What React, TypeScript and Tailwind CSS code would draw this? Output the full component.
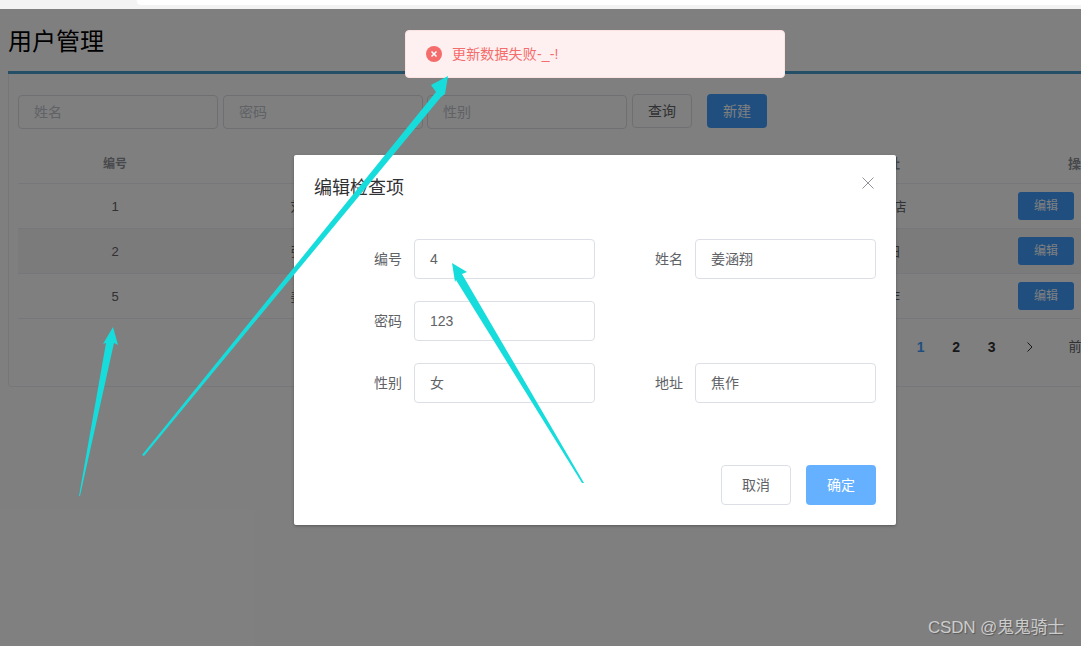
const rows = [
  { id: 1, name: "刘嘉怡", addr: "五星店", striped: false },
  { id: 2, name: "张雨桐", addr: "洛阳", striped: true },
  { id: 5, name: "姜涵翔", addr: "焦作", striped: false },
];

const SearchInput = ({ placeholder, className }: { placeholder: string; className: string }) => (
  <div className={`h-[34px] border border-[#dcdfe6] rounded-[4px] pl-[15px] flex items-center text-sm text-[#c0c4cc] ${className}`}>
    {placeholder}
  </div>
);

const Field = ({ label, value, labelWidth }: { label: string; value: string; labelWidth: string }) => (
  <div className="flex items-center">
    <label className={`${labelWidth} pr-3 text-right text-sm text-[#606266]`}>{label}</label>
    <div className="w-[181px] h-10 border border-[#dcdfe6] rounded-[4px] pl-[15px] flex items-center text-sm text-[#606266]">
      {value}
    </div>
  </div>
);

const App = () => {
  return (
    <div
      className="relative w-[1081px] h-[646px] overflow-hidden bg-white"
      style={{ fontFamily: '"Liberation Sans", "Noto Sans CJK SC", sans-serif' }}
    >
      {/* 브라우저 상단 */}
      <div className="h-[9px] bg-[#f3f3f3] pl-[137px]">
        <div className="h-[5px] bg-white rounded-bl-[4px]" />
      </div>

      {/* 페이지 */}
      <div className="w-[1200px] pl-2">
        <h1 className="h-[62px] pt-[15px] text-2xl leading-9 text-black">用户管理</h1>
        <div className="h-[3px] bg-[#4a9ecc]" />
        <div className="h-[313px] border-l border-b border-[#ebeef5] rounded-bl-[4px] pl-[9px]">
          <div className="flex items-start pt-[21px]">
            <SearchInput placeholder="姓名" className="w-[200px]" />
            <SearchInput placeholder="密码" className="w-[200px] ml-[5px]" />
            <SearchInput placeholder="性别" className="w-[200px] ml-1" />
            <button className="w-[60px] h-[34px] -mt-px ml-[5px] border border-[#dcdfe6] rounded-[4px] text-sm text-[#606266]">
              查询
            </button>
            <button className="w-[60px] h-[34px] -mt-px ml-[15px] bg-[#409eff] rounded-[4px] text-sm text-white">
              新建
            </button>
          </div>

          <div className="flex h-[41px] mt-[14px] pt-[2px] items-center border-b border-[#ebeef5] text-xs font-bold text-[#909399]">
            <div className="w-[194px] text-center">编号</div>
            <div className="w-[196px] text-center">姓名</div>
            <div className="w-[399px] text-center">密码</div>
            <div className="w-[160px] text-center text-[13px]">地址</div>
            <div className="pl-[101px] text-[13px]">操作</div>
          </div>
          {rows.map((row) => (
            <div
              key={row.id}
              className={`flex h-[45px] items-center border-b border-[#ebeef5] text-[13px] text-[#606266] ${row.striped ? "bg-[#f7f7f7]" : ""}`}
            >
              <div className="w-[194px] pt-[2px] text-center">{row.id}</div>
              <div className="w-[196px] pt-[2px] text-center">{row.name}</div>
              <div className="w-[399px] pt-[2px] text-center">123</div>
              <div className="w-[160px] pt-[2px] text-center">{row.addr}</div>
              <div className="pl-[51px]">
                <button className="block w-14 h-[28px] bg-[#409eff] rounded-[3px] text-xs text-white">编辑</button>
              </div>
            </div>
          ))}
          <div className="flex items-center h-[56px] pl-[885px] text-sm font-bold text-[#303133]">
            <span className="w-[35.5px] text-center text-[#409eff]">1</span>
            <span className="w-[35.5px] text-center">2</span>
            <span className="w-[35.5px] text-center">3</span>
            <svg className="ml-[14px] w-[12px] h-[12px]" viewBox="0 0 12 12" fill="none" stroke="#303133" strokeWidth="1">
              <path d="M3.5 1.5 L8 6 L3.5 10.5" />
            </svg>
            <span className="ml-[33px] text-[13px] font-normal text-[#606266]">前往</span>
          </div>
        </div>
      </div>

      {/* 遮罩 + 弹窗 */}
      <div className="absolute inset-x-0 bottom-0 top-[9px] bg-black/50 pl-[294px] pt-[146px]">
        <div className="relative w-[602px] h-[370px] bg-white rounded-[2px] shadow-[0_1px_3px_rgba(0,0,0,0.3)]">
          <div className="pl-5 pt-[21px] text-lg leading-6 text-[#303133]">编辑检查项</div>
          <button className="absolute right-[22px] top-[22px] text-[#909399]">
            <svg className="w-3 h-3 block" viewBox="0 0 12 12" fill="none" stroke="currentColor" strokeWidth="1">
              <path d="M0.5 0.5 L11.5 11.5 M11.5 0.5 L0.5 11.5" />
            </svg>
          </button>
          <div className="mt-[39px] flex flex-col gap-[22px]">
            <div className="flex">
              <Field label="编号" value="4" labelWidth="w-[120px]" />
              <Field label="姓名" value="姜涵翔" labelWidth="w-[100px]" />
            </div>
            <Field label="密码" value="123" labelWidth="w-[120px]" />
            <div className="flex">
              <Field label="性别" value="女" labelWidth="w-[120px]" />
              <Field label="地址" value="焦作" labelWidth="w-[100px]" />
            </div>
          </div>
          <div className="absolute right-5 bottom-5 flex gap-[15px]">
            <button className="w-[70px] h-10 border border-[#dcdfe6] rounded-[4px] text-sm text-[#606266]">取消</button>
            <button className="w-[70px] h-10 bg-[#66b1ff] rounded-[4px] text-sm text-white">确定</button>
          </div>
        </div>
      </div>

      {/* 错误提示 */}
      <div className="absolute left-[405px] top-[30px] w-[380px] h-12 bg-[#fef0f0] border border-[#fde2e2] rounded-[4px] flex items-center pl-5 text-sm text-[#f56c6c]">
        <svg className="w-4 h-4 mr-[10px] shrink-0" viewBox="0 0 16 16">
          <circle cx="8" cy="8" r="8" fill="#f56c6c" />
          <path d="M5.5 5.5 L10.5 10.5 M10.5 5.5 L5.5 10.5" stroke="#fff" strokeWidth="1.5" />
        </svg>
        <span className="tracking-[0.15px]">更新数据失败-_-!</span>
      </div>

      {/* 标注箭头 */}
      <svg className="absolute inset-0 pointer-events-none" width="1081" height="646" viewBox="0 0 1081 646">
        <g fill="#17dcdc">
          <polygon points="79,496 80,496 114,343 118,345 113,327 103,344 106,343" />
          <polygon points="142,455 144,456 441,97 445,94 448,76 431,85 436,92" />
          <polygon points="582,483 584,483 462,274 467,272 452,263 455,282 456,280" />
        </g>
      </svg>

      {/* 水印 */}
      <div className="absolute left-[928px] top-[617px] text-[17px] tracking-[-0.2px] leading-[22px] text-[#cccccc] [text-shadow:1px_1px_1px_rgba(0,0,0,0.3)] whitespace-nowrap">
        CSDN @鬼鬼骑士
      </div>
    </div>
  );
};

export default App;
